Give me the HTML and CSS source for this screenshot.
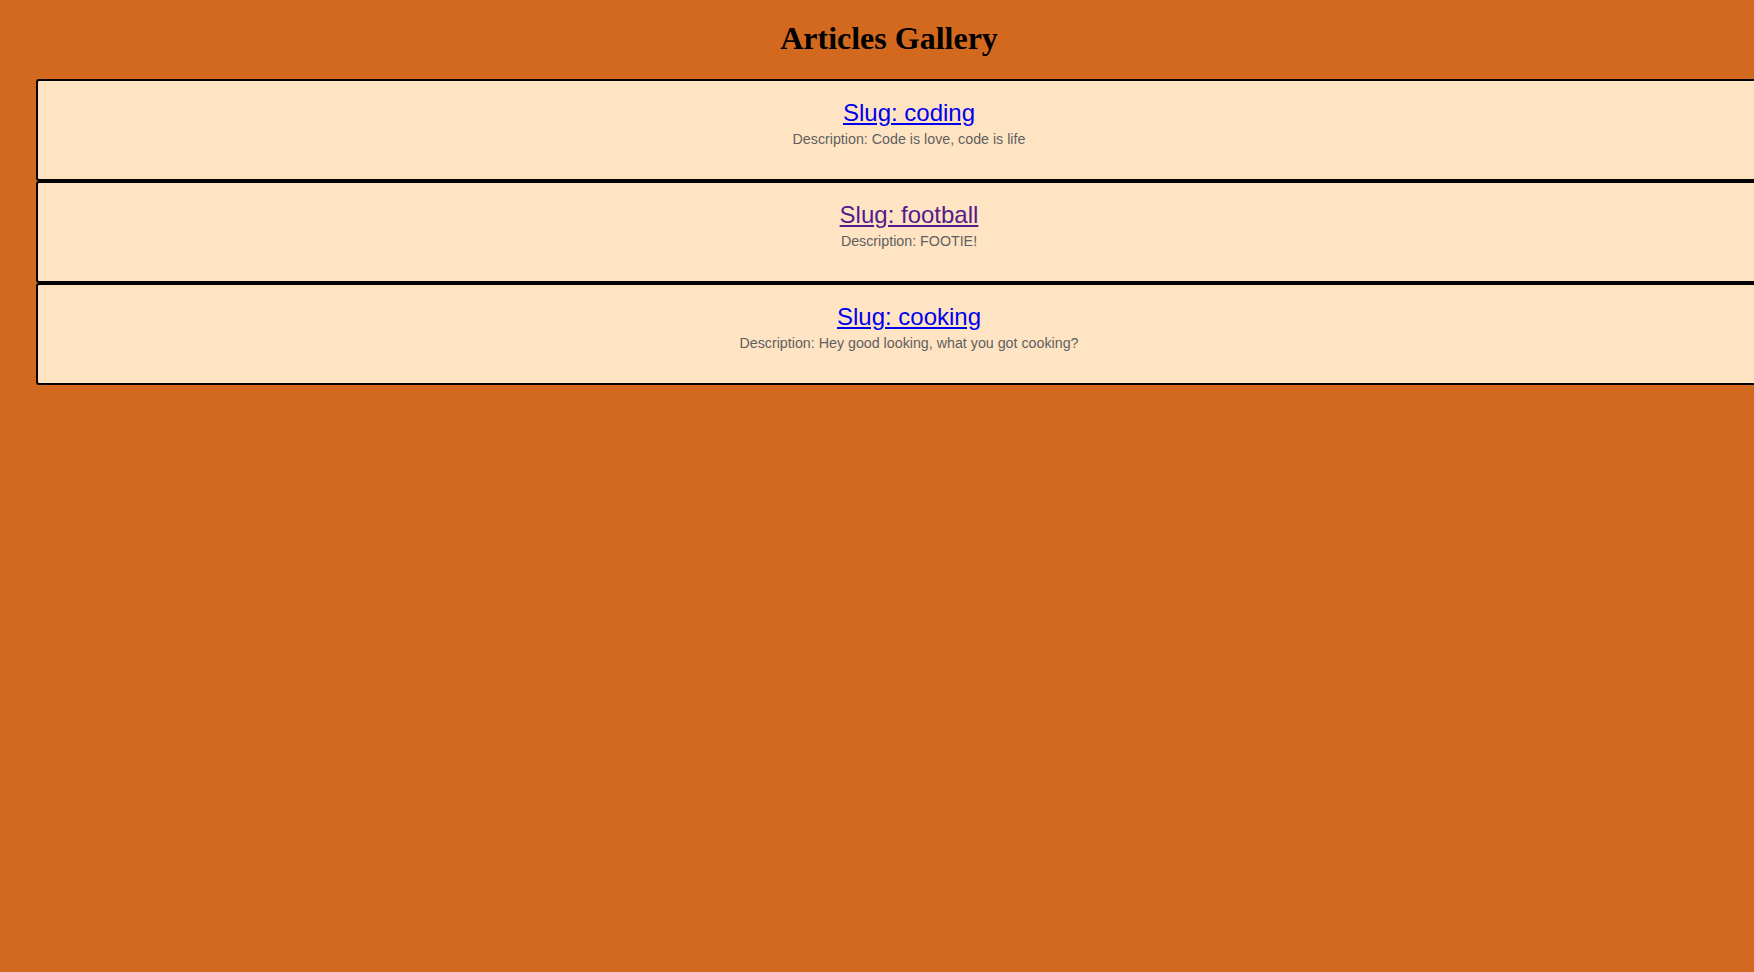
FILE: index.html
```html
<!DOCTYPE html>
<html lang="en">
<head>
<meta charset="utf-8">
<title>Articles Gallery</title>
<link rel="stylesheet" href="styles.css">
</head>
<body>
<div class="page">
  <h1 class="title">Articles Gallery</h1>
  <div class="gallery">
    <div class="card">
      <a class="slug" href="#coding">Slug: coding</a>
      <p class="desc">Description: Code is love, code is life</p>
    </div>
    <div class="card">
      <a class="slug visited" href="#football">Slug: football</a>
      <p class="desc">Description: FOOTIE!</p>
    </div>
    <div class="card">
      <a class="slug" href="#cooking">Slug: cooking</a>
      <p class="desc">Description: Hey good looking, what you got cooking?</p>
    </div>
  </div>
</div>
</body>
</html>
```
FILE: styles.css
```css
html, body {
  margin: 0;
  padding: 0;
  overflow-x: hidden;
}
body {
  background: #D2691E;
  min-height: 100vh;
}
.page {
  padding: 0 12px 0 36px;
}
.title {
  margin: 0;
  padding: 20px 0 22px;
  text-align: center;
  font-family: "Liberation Serif", serif;
  font-size: 32px;
  font-weight: bold;
  line-height: 37px;
  color: #000;
}
.gallery {
  display: flex;
  flex-direction: column;
  width: 1746px;
}
.card {
  box-sizing: border-box;
  width: 1746px;
  height: 102px;
  background: #FFE4C4;
  border: 2px solid #000;
  border-radius: 3px;
  padding: 18px 18px 0;
  text-align: center;
  font-family: "Liberation Sans", Arial, sans-serif;
}
.slug {
  display: inline-block;
  font-size: 24px;
  line-height: 28px;
  color: #0000EE;
  text-decoration: underline;
}
.slug.visited {
  color: #551A8B;
}
.desc {
  margin: 4px 0 0;
  font-size: 14.25px;
  line-height: 16px;
  color: #5f5f5f;
}
```
